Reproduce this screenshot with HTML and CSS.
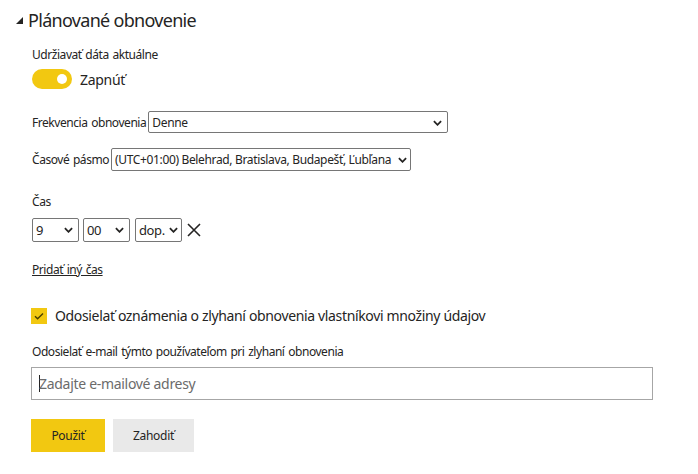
FILE: index.html
```html
<!DOCTYPE html>
<html>
<head>
<meta charset="utf-8">
<title>Plánované obnovenie</title>
<link rel="stylesheet" href="styles.css">
</head>
<body>
<div class="panel">
  <h2 class="heading"><span class="caret"></span>Plánované obnovenie</h2>

  <div class="section keep">
    <div class="label">Udržiavať dáta aktuálne</div>
    <div class="toggle-row">
      <span class="toggle"><span class="knob"></span></span>
      <span class="toggle-text">Zapnúť</span>
    </div>
  </div>

  <div class="field freq">
    <span class="label">Frekvencia obnovenia</span>
    <span class="select wide">
      <select><option>Denne</option></select>
      <svg class="chev" viewBox="0 0 10 6"><path d="M1 1l4 4 4-4" /></svg>
    </span>
  </div>

  <div class="field zone">
    <span class="label">Časové pásmo</span>
    <span class="select tz">
      <select><option>(UTC+01:00) Belehrad, Bratislava, Budapešť, Ľubľana</option></select>
      <svg class="chev" viewBox="0 0 10 6"><path d="M1 1l4 4 4-4" /></svg>
    </span>
  </div>

  <div class="section time">
    <div class="label">Čas</div>
    <div class="time-row">
      <span class="select hour">
        <select><option>9</option></select>
        <svg class="chev" viewBox="0 0 10 6"><path d="M1 1l4 4 4-4" /></svg>
      </span>
      <span class="select minute">
        <select><option>00</option></select>
        <svg class="chev" viewBox="0 0 10 6"><path d="M1 1l4 4 4-4" /></svg>
      </span>
      <span class="select ampm">
        <select><option>dop.</option></select>
        <svg class="chev" viewBox="0 0 10 6"><path d="M1 1l4 4 4-4" /></svg>
      </span>
      <svg class="remove" viewBox="0 0 14 14"><path d="M1 1l12 12M13 1L1 13" /></svg>
    </div>
  </div>

  <a class="add-time" href="#">Pridať iný čas</a>

  <label class="check-row">
    <span class="check"><svg viewBox="0 0 16 16"><path d="M4 8.2l2.6 2.6L12 5.4" /></svg></span>
    <span class="check-text">Odosielať oznámenia o zlyhaní obnovenia vlastníkovi množiny údajov</span>
  </label>

  <div class="section mail">
    <div class="label">Odosielať e-mail týmto používateľom pri zlyhaní obnovenia</div>
    <div class="input"><span class="cursor"></span>Zadajte e-mailové adresy</div>
  </div>

  <div class="buttons">
    <button class="btn primary">Použiť</button>
    <button class="btn">Zahodiť</button>
  </div>
</div>
</body>
</html>
```

FILE: styles.css
```css
body {
  margin: 0;
  background: #fff;
  color: #252423;
  font-family: 'Noto Sans', 'Open Sans', sans-serif;
}

.panel {
  padding: 0 0 0 32px;
}

.heading {
  margin: 0 0 0 -16px;
  padding-top: 4px;
  height: 32px;
  font-size: 18px;
  font-weight: normal;
  line-height: 26px;
  letter-spacing: -0.7px;
  color: #252423;
  display: flex;
  align-items: center;
}
.caret {
  width: 0;
  height: 0;
  border-left: 7px solid transparent;
  border-bottom: 7px solid #252423;
  margin: 0 5px 0 0;
}

.label {
  font-size: 12px;
  letter-spacing: -0.45px;
  word-spacing: 1px;
  color: #252423;
}

.keep {
  margin-top: 10px;
}
.keep .label {
  line-height: 18px;
}
.toggle-row {
  display: flex;
  align-items: center;
  margin-top: 5px;
}
.toggle {
  width: 40px;
  height: 20px;
  border-radius: 10px;
  background: #f2c811;
  position: relative;
}
.knob {
  position: absolute;
  top: 5px;
  right: 5px;
  width: 10px;
  height: 10px;
  border-radius: 50%;
  background: #fff;
}
.toggle-text {
  margin-left: 8px;
  font-size: 14px;
  letter-spacing: -0.3px;
}

.field {
  display: flex;
  align-items: center;
}
.field .label {
  margin-right: 2px;
}
.freq {
  margin-top: 22px;
}
.zone {
  margin-top: 15px;
}

.select {
  position: relative;
  display: inline-block;
}
.select select {
  appearance: none;
  -webkit-appearance: none;
  display: block;
  box-sizing: border-box;
  height: 23px;
  margin: 0;
  padding: 0 18px 0 3px;
  border: 1px solid #767676;
  border-radius: 2px;
  background: #fff;
  font-family: inherit;
  font-size: 12px;
  letter-spacing: -0.35px;
  color: #252423;
}
.select .chev {
  position: absolute;
  right: 6px;
  top: 9px;
  width: 9px;
  height: 6px;
  fill: none;
  stroke: #252423;
  stroke-width: 2;
  pointer-events: none;
}
.wide select {
  width: 300px;
  height: 22px;
}
.tz select {
  width: 300px;
}
.tz .chev {
  right: 4px;
}

.time {
  margin-top: 22px;
}
.time .label {
  line-height: 18px;
}
.time-row {
  display: flex;
  align-items: center;
  margin-top: 7px;
  gap: 4px;
}
.time-row select {
  height: 24px;
  font-size: 13px;
}
.hour select,
.minute select {
  width: 47px;
}
.ampm select {
  width: 47px;
  padding-right: 14px;
  letter-spacing: -0.4px;
}
.ampm .chev {
  right: 4px;
}
.ampm {
  margin-left: 1px;
}
.remove {
  width: 14px;
  height: 14px;
  margin-left: 1px;
  fill: none;
  stroke: #252423;
  stroke-width: 1.6;
}

.add-time {
  display: inline-block;
  margin-top: 19px;
  font-size: 12px;
  letter-spacing: -0.45px;
  word-spacing: 1px;
  color: #252423;
  text-decoration: underline;
}

.check-row {
  display: flex;
  align-items: center;
  margin-top: 27px;
  margin-left: -1px;
}
.check {
  width: 16px;
  height: 16px;
  background: #f2c811;
  display: flex;
}
.check svg {
  width: 16px;
  height: 16px;
  fill: none;
  stroke: #4a4000;
  stroke-width: 1.4;
}
.check-text {
  margin-left: 8px;
  font-size: 14px;
  letter-spacing: -0.35px;
  color: #252423;
}

.mail {
  margin-top: 18px;
}
.mail .label {
  line-height: 18px;
}
.input {
  box-sizing: border-box;
  width: 622px;
  height: 33px;
  margin: 6px 0 0 -1px;
  border: 1px solid #a6a6a6;
  display: flex;
  align-items: center;
  padding-left: 7px;
  font-size: 14px;
  letter-spacing: -0.3px;
  color: #6b6b6b;
}
.cursor {
  width: 1px;
  height: 17px;
  background: #252423;
  margin-right: -1px;
}

.buttons {
  display: flex;
  gap: 8px;
  margin: 19px 0 0 -1px;
}
.btn {
  height: 33px;
  border: none;
  border-radius: 0;
  padding: 0;
  background: #e9e9e9;
  font-family: inherit;
  font-size: 12px;
  letter-spacing: -0.3px;
  color: #252423;
  width: 81px;
}
.btn.primary {
  background: #f2c811;
  width: 74px;
}
```
